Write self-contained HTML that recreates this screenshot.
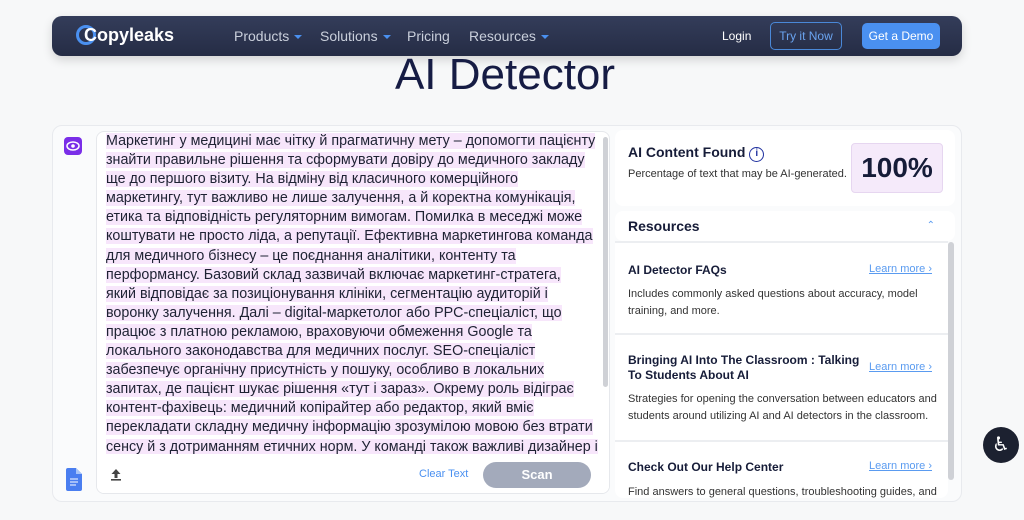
<!DOCTYPE html>
<html><head><meta charset="utf-8"><style>
*{box-sizing:border-box;margin:0;padding:0}
body{width:1024px;height:520px;overflow:hidden;background:#f7f8f9;font-family:"Liberation Sans","DejaVu Sans",sans-serif;position:relative}
.nav{position:absolute;left:52px;top:16px;width:910px;height:40px;border-radius:10px;background:linear-gradient(#343d5a,#252c45);box-shadow:0 4px 10px rgba(0,0,0,.15)}
.nav span{position:absolute;top:12px;color:#c9cfdb;font-size:14px}
.car{display:inline-block;border-left:4px solid transparent;border-right:4px solid transparent;border-top:4px solid #4a90f0;vertical-align:middle;margin-left:5px}
.logo{position:absolute;left:24px;top:9px;color:#fff;font-weight:bold;font-size:18px}
h1{position:absolute;left:0;width:1010px;text-align:center;top:50px;font-weight:normal;font-size:44px;color:#161c44}
.card{position:absolute;left:52px;top:125px;width:910px;height:377px;background:#fafbfc;border:1px solid #e8eaee;border-radius:10px}
.ed{position:absolute;left:96px;top:131px;width:514px;height:363px;background:#fff;border:1px solid #e6e8ec;border-radius:8px;overflow:hidden}
.txt{position:absolute;left:9px;top:0px;font-size:14.3px;line-height:19.1px;color:#1e2233}
.txt div{white-space:nowrap}.txt span{background:#f7e6fb}
.sb{position:absolute;left:603px;top:137px;width:5px;height:250px;background:#cfd1d6;border-radius:3px}
.box{background:#fff;border-radius:8px}
.b{font-weight:bold;color:#161c38}
.item{position:absolute;left:615px;width:333px;background:#fff;border-top:2px solid #eceef1}
.lm{position:absolute;right:16px;color:#5a9bf0;font-size:11px;text-decoration:underline}
.d{font-size:11px;color:#333;line-height:17px}
</style></head><body>
<div class="nav">
<div class="logo"><span style="position:static;display:inline-block;width:20px;height:20px;border:3px solid #4a90f0;border-radius:50%;vertical-align:-4px;margin-right:-12px"></span>Copyleaks</div>
<span style="left:182px">Products<i class="car"></i></span>
<span style="left:268px">Solutions<i class="car"></i></span>
<span style="left:355px">Pricing</span>
<span style="left:417px">Resources<i class="car"></i></span>
<span style="left:670px;color:#fff;font-size:12px;top:13px">Login</span>
<div style="position:absolute;left:718px;top:6px;width:72px;height:28px;border:1px solid #4a88d8;border-radius:5px;color:#6aa4f0;font-size:12px;text-align:center;line-height:26px">Try it Now</div>
<div style="position:absolute;left:810px;top:7px;width:78px;height:26px;background:#4a90f0;border-radius:5px;color:#fff;font-size:12px;text-align:center;line-height:26px">Get a Demo</div>
</div>
<h1>AI Detector</h1>
<div class="card"></div>
<svg style="position:absolute;left:64px;top:137px" width="18" height="18" viewBox="0 0 18 18"><rect width="18" height="18" rx="4" fill="#7a2ee8"/><ellipse cx="9" cy="9" rx="6" ry="4" fill="none" stroke="#fff" stroke-width="1.5"/><circle cx="9" cy="9" r="1.8" fill="#fff"/></svg>
<svg style="position:absolute;left:66px;top:468px" width="16" height="23" viewBox="0 0 16 23"><path d="M2 0h8l6 6v15a2 2 0 0 1-2 2H2a2 2 0 0 1-2-2V2a2 2 0 0 1 2-2z" fill="#4a7ef0"/><path d="M10 0v6h6z" fill="#a8c4f8"/><path d="M4 11h8M4 14h8M4 17h6" stroke="#fff" stroke-width="1"/></svg>
<div class="ed">
<div class="txt">
<div><span>Маркетинг у медицині має чітку й прагматичну мету – допомогти пацієнту</span></div>
<div><span>знайти правильне рішення та сформувати довіру до медичного закладу</span></div>
<div><span>ще до першого візиту. На відміну від класичного комерційного</span></div>
<div><span>маркетингу, тут важливо не лише залучення, а й коректна комунікація,</span></div>
<div><span>етика та відповідність регуляторним вимогам. Помилка в меседжі може</span></div>
<div><span>коштувати не просто ліда, а репутації. Ефективна маркетингова команда</span></div>
<div><span>для медичного бізнесу – це поєднання аналітики, контенту та</span></div>
<div><span>перформансу. Базовий склад зазвичай включає маркетинг-стратега,</span></div>
<div><span>який відповідає за позиціонування клініки, сегментацію аудиторій і</span></div>
<div><span>воронку залучення. Далі – digital-маркетолог або PPC-спеціаліст, що</span></div>
<div><span>працює з платною рекламою, враховуючи обмеження Google та</span></div>
<div><span>локального законодавства для медичних послуг. SEO-спеціаліст</span></div>
<div><span>забезпечує органічну присутність у пошуку, особливо в локальних</span></div>
<div><span>запитах, де пацієнт шукає рішення «тут і зараз». Окрему роль відіграє</span></div>
<div><span>контент-фахівець: медичний копірайтер або редактор, який вміє</span></div>
<div><span>перекладати складну медичну інформацію зрозумілою мовою без втрати</span></div>
<div><span>сенсу й з дотриманням етичних норм. У команді також важливі дизайнер і</span></div>
</div>
<div style="position:absolute;left:0;top:322px;width:514px;height:42px;background:#fff"></div>
<svg style="position:absolute;left:13px;top:336px" width="12" height="13" viewBox="0 0 12 13"><path d="M6 1L1.5 6h3v4h3V6h3z" fill="#444"/><rect x="1" y="11" width="10" height="1.6" fill="#444"/></svg>
<div style="position:absolute;left:322px;top:336px;font-size:11px;color:#4a90f0">Clear Text</div>
<div style="position:absolute;left:386px;top:330px;width:108px;height:26px;background:#a3aabb;border-radius:13px;color:#fff;font-weight:bold;font-size:13px;text-align:center;line-height:26px">Scan</div>
</div>
<div class="sb"></div>
<div class="box" style="position:absolute;left:615px;top:130px;width:340px;height:76px">
<div class="b" style="position:absolute;left:13px;top:14px;font-size:14px">AI Content Found <span style="display:inline-block;width:15px;height:15px;border:1.5px solid #2233a0;border-radius:50%;font-size:10px;text-align:center;line-height:12px;color:#2233a0;vertical-align:1px">i</span></div>
<div style="position:absolute;left:13px;top:38px;font-size:11px;color:#333">Percentage of text that may be AI-generated.</div>
<div style="position:absolute;left:236px;top:13px;width:92px;height:50px;background:#f5eafa;border:1px solid #e6d6f0;border-radius:4px;text-align:center;line-height:48px;font-weight:bold;font-size:28px;color:#161c38">100%</div>
</div>
<div class="box" style="position:absolute;left:615px;top:211px;width:340px;height:30px">
<div class="b" style="position:absolute;left:13px;top:7px;font-size:14px">Resources</div>
<div style="position:absolute;right:20px;top:9px;font-size:10px;color:#5a9bf0">⌃</div>
</div>
<div class="item" style="top:241px;height:92px"><div class="b" style="position:absolute;left:13px;top:20px;font-size:12px">AI Detector FAQs</div><div class="lm" style="top:20px">Learn more ›</div><div class="d" style="position:absolute;left:13px;top:43px">Includes commonly asked questions about accuracy, model<br>training, and more.</div></div>
<div class="item" style="top:333px;height:107px"><div class="b" style="position:absolute;left:13px;top:18px;font-size:12px;line-height:15px">Bringing AI Into The Classroom : Talking<br>To Students About AI</div><div class="lm" style="top:26px">Learn more ›</div><div class="d" style="position:absolute;left:13px;top:56px">Strategies for opening the conversation between educators and<br>students around utilizing AI and AI detectors in the classroom.</div></div>
<div class="item" style="top:440px;height:58px;border-radius:0 0 8px 8px"><div class="b" style="position:absolute;left:13px;top:18px;font-size:12px">Check Out Our Help Center</div><div class="lm" style="top:18px">Learn more ›</div><div class="d" style="position:absolute;left:13px;top:42px">Find answers to general questions, troubleshooting guides, and</div></div>
<div style="position:absolute;left:948px;top:242px;width:6px;height:238px;background:#cfd1d6;border-radius:3px"></div>
<div style="position:absolute;left:983px;top:427px;width:36px;height:36px;background:#1c2130;border-radius:50%;color:#fff;font-size:20px;text-align:center;line-height:36px">♿</div>
</body></html>
